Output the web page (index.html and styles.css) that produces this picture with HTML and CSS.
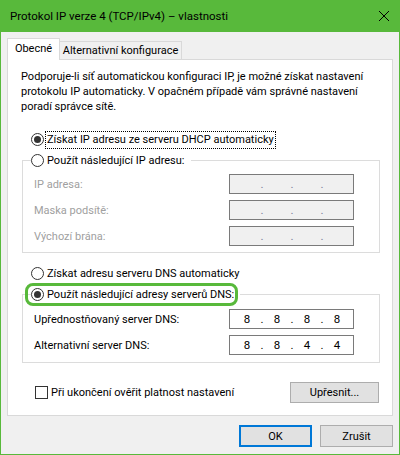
FILE: index.html
```html
<!DOCTYPE html>
<html lang="cs">
<head>
<meta charset="utf-8">
<title>Protokol IP verze 4 (TCP/IPv4) – vlastnosti</title>
<link rel="stylesheet" href="styles.css">
</head>
<body>
<div class="window">
  <div class="titlebar">
    <span class="title">Protokol IP verze 4 (TCP/IPv4) – vlastnosti</span>
    <svg class="close" width="12" height="12" viewBox="0 0 12 12"><path d="M1 1L11 11M11 1L1 11" stroke="#000" stroke-width="1" fill="none"/></svg>
  </div>
  <div class="body">
    <div class="tabs">
      <div class="tab active">Obecné</div>
      <div class="tab">Alternativní konfigurace</div>
    </div>
    <div class="panel">
      <p class="desc">Podporuje-li síť automatickou konfiguraci IP, je možné získat nastavení<br>protokolu IP automaticky. V opačném případě vám správné nastavení<br>poradí správce sítě.</p>

      <div class="option first"><span class="radio checked"></span><span class="label focus">Získat IP adresu ze serveru DHCP automaticky</span></div>

      <fieldset class="group ipgroup">
        <legend><span class="option"><span class="radio"></span><span class="label">Použít následující IP adresu:</span></span></legend>
        <div class="field disabled"><span class="flabel">IP adresa:</span><div class="ip"><span class="seg"></span><span class="dot">.</span><span class="seg"></span><span class="dot">.</span><span class="seg"></span><span class="dot">.</span><span class="seg"></span></div></div>
        <div class="field disabled"><span class="flabel">Maska podsítě:</span><div class="ip"><span class="seg"></span><span class="dot">.</span><span class="seg"></span><span class="dot">.</span><span class="seg"></span><span class="dot">.</span><span class="seg"></span></div></div>
        <div class="field disabled"><span class="flabel">Výchozí brána:</span><div class="ip"><span class="seg"></span><span class="dot">.</span><span class="seg"></span><span class="dot">.</span><span class="seg"></span><span class="dot">.</span><span class="seg"></span></div></div>
      </fieldset>

      <div class="option dnsauto"><span class="radio"></span><span class="label">Získat adresu serveru DNS automaticky</span></div>

      <fieldset class="group dnsgroup">
        <legend><span class="option highlight"><span class="radio checked"></span><span class="label">Použít následující adresy serverů DNS:</span></span></legend>
        <div class="field"><span class="flabel">Upřednostňovaný server DNS:</span><div class="ip"><span class="seg">8</span><span class="dot">.</span><span class="seg">8</span><span class="dot">.</span><span class="seg">8</span><span class="dot">.</span><span class="seg">8</span></div></div>
        <div class="field"><span class="flabel">Alternativní server DNS:</span><div class="ip"><span class="seg">8</span><span class="dot">.</span><span class="seg">8</span><span class="dot">.</span><span class="seg">4</span><span class="dot">.</span><span class="seg">4</span></div></div>
      </fieldset>

      <div class="bottomrow">
        <div class="option"><span class="checkbox"></span><span class="label">Při ukončení ověřit platnost nastavení</span></div>
        <button class="btn advanced">Upřesnit...</button>
      </div>
    </div>
    <div class="footer">
      <button class="btn default">OK</button>
      <button class="btn">Zrušit</button>
    </div>
  </div>
</div>
</body>
</html>
```

FILE: styles.css
```css
* { box-sizing: border-box; }
html, body { margin: 0; padding: 0; }
body {
  font-family: Roboto, "Liberation Sans", Arial, sans-serif;
  font-size: 11px;
  color: #000;
  background: #f0f0f0;
}
.window {
  width: 400px;
  height: 455px;
  background: #58b93b;
  display: flex;
  flex-direction: column;
}
.titlebar {
  height: 32px;
  flex: none;
  display: flex;
  align-items: center;
  justify-content: space-between;
  padding: 0 10px 0 10px;
}
.title { font-size: 11.5px; line-height: 16px; white-space: nowrap; }
.close { display: block; }
.body {
  flex: 1;
  margin: 0 1px 1px 1px;
  background: #f0f0f0;
  padding: 6px 6px 0 6px;
}
.tabs {
  display: flex;
  align-items: flex-end;
  height: 21px;
}
.tab {
  height: 18px;
  line-height: 18px;
  border: 1px solid #d9d9d9;
  border-left: none;
  border-bottom: none;
  background: #f0f0f0;
  width: 122px;
  text-align: center;
  white-space: nowrap;
}
.tab.active {
  width: 53px;
  height: 22px;
  margin-bottom: -1px;
  background: #fff;
  border-left: 1px solid #d9d9d9;
  line-height: 20px;
  position: relative;
  z-index: 1;
}
.panel {
  height: 357px;
  background: #fff;
  border: 1px solid #d9d9d9;
}
.desc {
  margin: 9px 0 0 0;
  padding-left: 13px;
  line-height: 15px;
  white-space: nowrap;
}
.option {
  display: flex;
  align-items: center;
  height: 17px;
}
.option.first { margin: 17px 0 0 23px; }
.option.dnsauto { margin: 12px 0 0 23px; }
.radio {
  width: 13px;
  height: 13px;
  border: 1px solid #333;
  border-radius: 50%;
  background: #fff;
  margin-right: 3px;
  flex: none;
  position: relative;
}
.radio.checked::after {
  content: "";
  position: absolute;
  left: 2px; top: 2px;
  width: 7px; height: 7px;
  border-radius: 50%;
  background: #333;
}
.label { line-height: 15px; white-space: nowrap; }
.label.focus { outline: 1px dotted #000; margin-left: -1px; padding: 0 1px 1px 1px; }
.group {
  border: 1px solid #dcdcdc;
  margin: 4px 12px 0 14px;
  padding: 5px 0 6px 0;
  min-width: 0;
}
.group legend {
  padding: 0 6px 0 0;
  margin-left: 8px;
}
.dnsgroup { padding: 6px 0 7px 0; }
.highlight { position: relative; }
.highlight::before {
  content: "";
  position: absolute;
  left: -6px; right: -4px;
  top: -3px; bottom: -3px;
  border: 3px solid #58b93b;
  border-radius: 8px;
}
.field {
  display: flex;
  align-items: center;
  justify-content: space-between;
  height: 20px;
  padding: 0 25px 0 11px;
}
.field + .field { margin-top: 6px; }
.field.disabled .flabel { color: #a0a0a0; }
.ip {
  width: 125px;
  height: 20px;
  border: 1px solid #7a7a7a;
  background: #fff;
  display: flex;
  padding-left: 4px;
  line-height: 18px;
  font-size: 11.5px;
}
.field.disabled .ip { background: #f0f0f0; }
.seg { width: 26px; text-align: center; }
.dot { width: 4px; text-align: center; }
.field.disabled .dot { color: #7a7a9a; }
.bottomrow {
  margin: 19px 13px 0 27px;
  height: 21px;
  display: flex;
  align-items: center;
  justify-content: space-between;
}
.checkbox {
  width: 13px;
  height: 13px;
  border: 1px solid #333;
  background: #fff;
  margin-right: 3px;
  flex: none;
}
.btn {
  font-family: inherit;
  font-size: 11px;
  color: #000;
  background: #e1e1e1;
  border: 1px solid #adadad;
  padding: 0;
  margin: 0;
  height: 21px;
}
.advanced { width: 89px; }
.footer {
  display: flex;
  justify-content: flex-end;
  gap: 8px;
  margin-top: 9px;
}
.footer .btn { width: 73px; height: 22px; }
.btn.default { border: 2px solid #0078d7; }
```
